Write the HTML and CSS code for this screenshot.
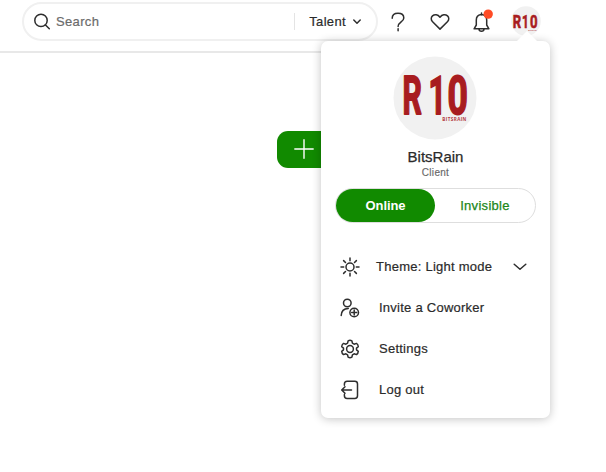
FILE: index.html
```html
<!DOCTYPE html>
<html lang="en">
<head>
<meta charset="utf-8">
<title>Account menu</title>
<link rel="stylesheet" href="styles.css">
</head>
<body>
<header class="topbar">
  <div class="search">
    <svg class="search-icon" width="18" height="18" viewBox="0 0 18 18"><circle cx="8" cy="7.4" r="6.2"/><path d="M12.5 11.9 16.3 15.8"/></svg>
    <span class="placeholder">Search</span>
    <div class="scope"><span class="scope-label">Talent</span>
      <svg width="8" height="6" viewBox="0 0 8 6"><path d="M.8 1 4 4.2 7.2 1"/></svg>
    </div>
  </div>
  <svg class="help" width="14" height="20" viewBox="0 0 14 20"><path d="M1.2 6.2C1.2 3 3.6 1.2 7 1.2S12.8 3 12.8 5.9C12.8 10 7.1 9.8 7.1 14.6"/><path d="M7.1 16.7V18.7"/></svg>
  <svg class="heart" width="20" height="18" viewBox="0 0 20 18"><path d="M10 16.1 2.6 8.8C.8 7 .8 4.4 2.5 2.9 4.6 1 7.9 1.3 10 4.2 12.1 1.3 15.4 1 17.5 2.9 19.2 4.4 19.2 7 17.4 8.8Z"/></svg>
  <svg class="bell" width="22" height="24" viewBox="0 0 22 24"><path d="M9 5.5C6 6 4.3 8 4.3 11V16L2.1 19.8H16.9L14.7 16V11C14.7 8 13 6 10 5.5M9.5 4V6M7 20.2C7.2 23 11.8 23 12 20.2"/><circle class="dot" cx="16.2" cy="5.1" r="4.7"/></svg>
  <svg class="avatar" width="30" height="30" viewBox="0 0 84 84"><circle cx="42" cy="42" r="41.5"/><g class="monogram"><text transform="translate(5 61) scale(.69 1)">R</text><text transform="translate(31 61) scale(.62 1)">1</text><text transform="translate(53 61) scale(.7 1)">0</text></g><text class="tag" x="48" y="71">BITSRAIN</text></svg>
</header>
<main class="page"><div class="create"><svg width="20" height="20" viewBox="0 0 20 20"><path d="M10 .8V19.2M.8 10H19.2"/></svg></div></main>

<section class="menu">
  <svg class="portrait" width="84" height="84" viewBox="0 0 84 84"><circle cx="42" cy="42" r="41.5"/><g class="monogram"><text transform="translate(9.5 58.4) scale(.57 1)">R</text><text transform="translate(35.4 58.4) scale(.58 1)">1</text><text transform="translate(54.6 58.4) scale(.67 1)">0</text></g><text class="tag" x="49.3" y="65">BITSRAIN</text></svg>
  <div class="name">BitsRain</div>
  <div class="role">Client</div>
  <div class="status"><span class="online">Online</span><span class="invisible">Invisible</span></div>
  <nav class="items">
    <div class="item theme"><svg width="20" height="20" viewBox="0 0 20 20"><circle cx="10" cy="10" r="4"/><path d="M10 1V3.7M10 16.3V19M1 10H3.7M16.3 10H19M3.6 3.6 5.5 5.5M14.5 14.5 16.4 16.4M3.6 16.4 5.5 14.5M14.5 5.5 16.4 3.6"/></svg><span class="label">Theme: Light mode</span><svg class="chevron" width="14" height="8" viewBox="0 0 14 8"><path d="M1.2 1.2 7 6.3 12.8 1.2"/></svg></div>
    <div class="item"><svg width="20" height="20" viewBox="0 0 20 20"><circle cx="7.3" cy="5" r="3.8"/><path d="M1.2 17.5C1.3 13 3.6 10.6 8.3 10.4"/><circle cx="14.2" cy="14.5" r="4.3"/><path d="M14.2 12V17M11.7 14.5H16.7"/></svg><span class="label">Invite a Coworker</span></div>
    <div class="item"><svg width="20" height="20" viewBox="0 0 20 20"><path d="M8.1 1.8Q10 .8 11.9 1.8L12.4 4.2 14.1 5.2 16.5 4.4Q18.2 5.5 18.3 7.7L16.5 9.2V10.8L18.3 12.3Q18.2 14.5 16.5 15.6L14.1 14.8 12.4 15.8 11.9 18.2Q10 19.2 8.1 18.2L7.6 15.8 5.9 14.8 3.5 15.6Q1.8 14.5 1.7 12.3L3.5 10.8V9.2L1.7 7.7Q1.8 5.5 3.5 4.4L5.9 5.2 7.6 4.2Z"/><circle cx="10" cy="10" r="3.4"/></svg><span class="label">Settings</span></div>
    <div class="item"><svg width="20" height="20" viewBox="0 0 20 20"><path d="M4.4 5.3V4Q4.4 1.3 7.1 1.3H14.8Q17.5 1.3 17.5 4V15.8Q17.5 18.5 14.8 18.5H7.1Q4.4 18.5 4.4 15.8V14.6M11.5 10H2M5 6.7 1.7 10 5 13.3"/></svg><span class="label">Log out</span></div>
  </nav>
</section>
</body>
</html>
```
FILE: styles.css
```css
* { box-sizing: border-box; }
body {
  margin: 0;
  width: 606px;
  height: 472px;
  overflow: hidden;
  position: relative;
  background: #fff;
  color: #2b2b2b;
  font-family: "Liberation Sans", Arial, sans-serif;
  font-size: 13px;
}
svg { display: block; flex: none; fill: none; stroke: #2e2e2e; stroke-width: 1.5; stroke-linejoin: round; stroke-linecap: round; }
.topbar { display: flex; align-items: flex-start; width: 550px; height: 53px; padding: 2px 0 0 22px; border-bottom: 2px solid #e8e8e8; }
.search { display: flex; align-items: center; flex: none; width: 356px; height: 39px; padding-left: 9px; border: 2px solid #f0f0f0; border-radius: 20px; }
.placeholder { margin-left: 5px; color: #6b6b6b; letter-spacing: .35px; -webkit-text-stroke: .2px; }
.scope { display: flex; align-items: center; height: 17px; margin-left: auto; padding: 0 15px 0 14px; border-left: 1px solid #e4e4e4; }
.scope-label { margin-right: 7px; letter-spacing: .35px; -webkit-text-stroke: .2px; }
.help { margin: 10px 0 0 13px; }
.heart { margin: 11px 0 0 25px; }
.bell { margin: 7px 0 0 22px; }
.bell .dot { fill: #ff4b25; stroke: none; }
.avatar { margin: 4px 0 0 17px; }
.avatar circle, .portrait circle { fill: #f1f1f1; stroke: none; }
.monogram { fill: #a81c20; stroke: #a81c20; stroke-width: 1.8; font: 700 53px Roboto, sans-serif; }
.tag { fill: #b43b42; stroke: none; font: 700 4.6px "Open Sans", sans-serif; letter-spacing: .4px; }
.page { padding: 78px 0 0 277px; }
.create { display: flex; align-items: center; width: 90px; height: 37px; padding-left: 17px; border-radius: 11px; background: #118a00; }
.create svg { stroke: #fff; stroke-width: 1.4; margin-bottom: 2px; }
.menu { position: absolute; left: 321px; top: 41px; width: 229px; height: 377px; padding: 15px 14px 0; border-radius: 7px; background: #fff; box-shadow: 0 1px 10px rgba(0,0,0,.24); }
.menu::before { content: ""; position: absolute; left: 196px; top: -10px; border: 10px solid transparent; border-top: 0; border-bottom-color: #fff; }
.portrait { margin: 0 auto 0 58px; }
.name { margin-top: 8px; text-align: center; font-size: 15px; line-height: 17px; -webkit-text-stroke: .25px; }
.role { margin-top: 1px; text-align: center; font-size: 10px; line-height: 13px; letter-spacing: .3px; color: #676767; -webkit-text-stroke: .15px; }
.status { display: flex; height: 35px; margin-top: 9px; border: 1px solid #dedede; border-radius: 18px; line-height: 33px; text-align: center; letter-spacing: .3px; }
.online { width: 99px; border-radius: 17px; background: #118a00; color: #fff; font-weight: 700; letter-spacing: -.1px; }
.invisible { flex: 1; color: #218719; -webkit-text-stroke: .25px; }
.items { margin-top: 23px; }
.item { display: flex; align-items: center; height: 41px; padding-left: 5px; }
.label { margin-left: 19px; letter-spacing: .25px; -webkit-text-stroke: .2px; }
.theme .label { margin-left: 16px; }
.chevron { margin-left: auto; margin-right: 9px; }
```
